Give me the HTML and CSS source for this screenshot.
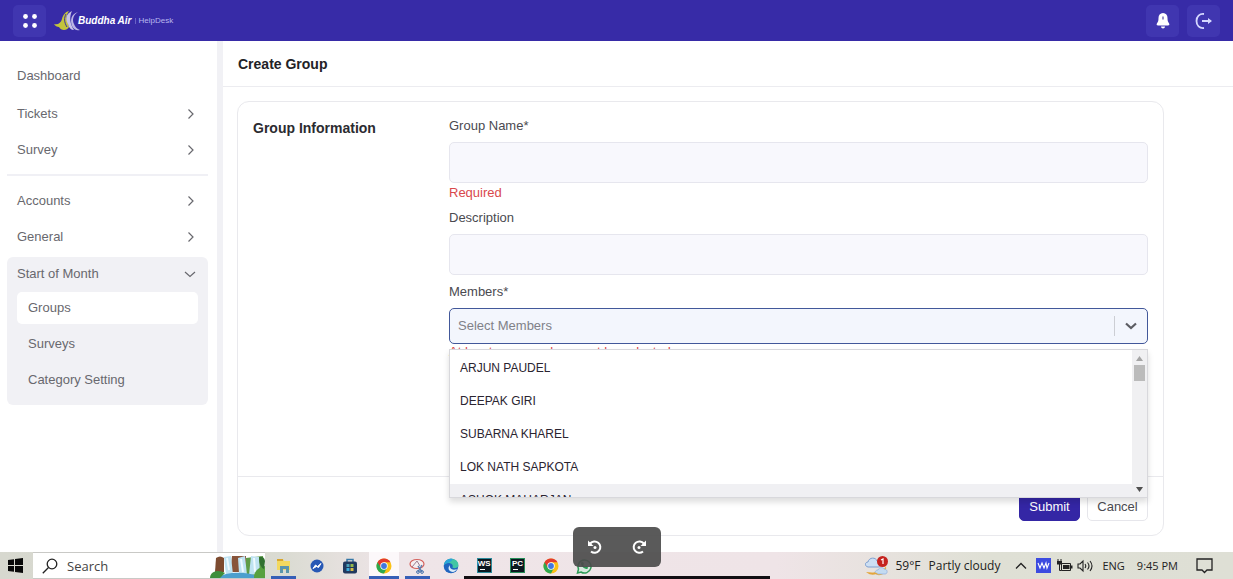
FILE: index.html
```
<!DOCTYPE html>
<html lang="en">
<head>
<meta charset="utf-8">
<meta name="viewport" content="width=device-width, initial-scale=1">
<title>Create Group</title>
<link rel="stylesheet" href="styles.css">
</head>
<body>
<svg class="defs" aria-hidden="true">
  <symbol id="chev-right" viewBox="0 0 10 12"><path d="M2.500 1.500 7 6l-4.500 4.500" fill="none" stroke="currentColor" stroke-width="1.200"/></symbol>
  <symbol id="chrome" viewBox="0 0 16 16">
    <circle cx="8" cy="8" r="7.500" fill="#fbc116"/>
    <path d="M1.500 4.250A7.500 7.500 0 0 0 8 15.500L11 9.800 8 8z" fill="#2da94f"/>
    <path d="M1.500 4.250A7.500 7.500 0 0 1 14.500 4.250H8L5 9.800z" fill="#e33b2e"/>
    <circle cx="8" cy="8" r="3.700" fill="#fff"/><circle cx="8" cy="8" r="2.900" fill="#4077e0"/>
  </symbol>
</svg>

<header class="topbar">
  <button class="tile" aria-label="Open menu">
    <svg width="16" height="16" viewBox="0 0 16 16" fill="#fff"><circle cx="3.500" cy="3.500" r="2.400"/><circle cx="12.500" cy="3.500" r="2.400"/><circle cx="3.500" cy="12.500" r="2.400"/><circle cx="12.500" cy="12.500" r="2.400"/></svg>
  </button>
  <a class="brand" href="#">
    <svg width="26" height="20" viewBox="0 0 26 20">
      <path d="M0 13c4 1 7-1 8-5C9 4 11 1 15 0c-3 4-3 8-1 12l1 4c-2 4-8 4-10 0-2 0-4-1-5-3z" fill="#c3c43c"/>
      <path d="M18 0c-6 3-7 8-4 13 1 4 3 6 6 6-4-6-5-13-2-19z" fill="#c7c3e8"/>
      <path d="M24 1c-5 3-6 8-4 12 1 3 3 5 6 6-3 1-6 0-8-4-2-6-1-12 6-14z" fill="#bbb6e4"/>
      <path d="M12 3c-2 4-2 8 1 13" fill="none" stroke="#372ba7"/>
    </svg>
    <strong>Buddha Air</strong><span class="brand-line"></span><span>HelpDesk</span>
  </a>
  <div class="topbar-actions">
    <button class="tile" aria-label="Notifications">
      <svg width="14" height="16" viewBox="0 0 14 16"><path d="M7 0C4 0 2.500 2.200 2.500 5c0 3-.5 4-1.500 5.200-.8 1.300-.2 2.300 1 2.300h10c1.200 0 1.800-1 1-2.300C12 9 11.500 8 11.500 5 11.500 2.200 10 0 7 0z" fill="#fff"/><path d="M5 13.500h4C9 16 5 16 5 13.500z" fill="#fff"/><path d="M7 3.500v3" stroke="#6860b0" stroke-width="1.400"/></svg>
    </button>
    <button class="tile" aria-label="Log out">
      <svg width="18" height="16" viewBox="0 0 18 16" fill="none" stroke="#d5d8ff" stroke-width="1.800"><path d="M9 1C4.500.5 1.500 3.500 1.500 8S4.500 15.500 9 15M7 8h9"/><path d="m13 5 4 3-4 3z" fill="#d5d8ff" stroke="none"/></svg>
    </button>
  </div>
</header>

<div class="layout">
  <nav class="sidebar" aria-label="Main">
    <a class="nav-item nav-home" href="#">Dashboard</a>
    <a class="nav-item" href="#">Tickets<svg width="10" height="12"><use href="#chev-right"/></svg></a>
    <a class="nav-item" href="#">Survey<svg width="10" height="12"><use href="#chev-right"/></svg></a>
    <hr class="nav-line">
    <a class="nav-item" href="#">Accounts<svg width="10" height="12"><use href="#chev-right"/></svg></a>
    <a class="nav-item" href="#">General<svg width="10" height="12"><use href="#chev-right"/></svg></a>
    <div class="nav-group">
      <a class="nav-item nav-open" href="#">Start of Month<svg width="12" height="10" viewBox="0 0 12 10"><path d="M1 3l5 4.500L11 3" fill="none" stroke="currentColor" stroke-width="1.200"/></svg></a>
      <a class="nav-sub active" href="#">Groups</a>
      <a class="nav-sub" href="#">Surveys</a>
      <a class="nav-sub" href="#">Category Setting</a>
    </div>
  </nav>

  <main class="content">
    <h1 class="page-title">Create Group</h1>
    <form class="card">
      <div class="card-body">
        <h2 class="section-title">Group Information</h2>
        <div class="fields">
          <label for="name">Group Name*</label>
          <input class="text-box" id="name" type="text">
          <p class="error">Required</p>
          <label for="description">Description</label>
          <input class="text-box" id="description" type="text">
          <label class="members-label" for="members">Members*</label>
          <div class="combo">
            <div class="combo-control">
              <input id="members" type="text" role="combobox" aria-expanded="true" aria-controls="member-list" placeholder="Select Members">
              <button type="button" class="combo-toggle" aria-label="Toggle members"><svg width="14" height="10" viewBox="0 0 14 10"><path d="m2 2.500 5 4.500 5-4.500" fill="none" stroke="#5c5d63" stroke-width="2.200"/></svg></button>
            </div>
            <p class="error">At least one member must be selected</p>
            <div class="menu">
              <ul id="member-list" role="listbox" aria-label="Members">
                <li role="option">ARJUN PAUDEL</li>
                <li role="option">DEEPAK GIRI</li>
                <li role="option">SUBARNA KHAREL</li>
                <li role="option">LOK NATH SAPKOTA</li>
                <li role="option" class="hover">ASHOK MAHARJAN</li>
              </ul>
              <div class="scroll" aria-hidden="true">
                <svg width="7" height="5" viewBox="0 0 7 5"><path d="M0 5 3.500 0 7 5z" fill="#a5a5a5"/></svg>
                <span class="thumb"></span>
                <svg class="down" width="7" height="5" viewBox="0 0 7 5"><path d="M0 0h7L3.500 5z" fill="#505050"/></svg>
              </div>
            </div>
          </div>
        </div>
      </div>
      <div class="card-footer">
        <button type="button" class="btn primary">Submit</button>
        <button type="button" class="btn">Cancel</button>
      </div>
    </form>
  </main>
</div>

<footer class="taskbar">
  <button class="start" aria-label="Start"><svg width="15" height="15" viewBox="0 0 15 15"><path d="M0 2l6-.8V7H0zM7 1l8-1v7H7zM0 8h6v5.800L0 13zM7 8h8v7l-8-1z" fill="#080808"/></svg></button>
  <div class="search">
    <svg width="16" height="16" viewBox="0 0 16 16" fill="none" stroke="#222" stroke-width="1.300"><circle cx="10" cy="6" r="4.800"/><path d="M6.500 9.500.8 15.200"/></svg>
    <input type="text" aria-label="Search" placeholder="Search">
    <svg class="scene" width="55" height="23" viewBox="0 0 55 23">
      <path d="M6 3q4-3 8 0v14H5z" fill="#7d4b30"/><path d="M22 1h14v16H20z" fill="#87543a"/><path d="M36 3l17-2 1 20H36z" fill="#5e9c46"/>
      <path d="M14 2l7-1 2 19h-7zM28 3l7-2 2 19-8-2zM41 1l8 1 1 17-11 1z" fill="#bfe3f2"/><path d="M17 3l2 12M31 4l2 13M44 3l1 14" stroke="#eefaff" stroke-width="2"/>
      <path d="M8 23c6-7 35-7 41 0z" fill="#4c9fce"/><path d="M0 23c0-7 9-9 15-5l-5 5z" fill="#3d8e3b"/><path d="M44 23c0-9 7-11 11-12v12z" fill="#57a13e"/><path d="M49 2q5-1 6 4l-1 8q-5-2-5-12z" fill="#31712f"/>
    </svg>
  </div>
  <div class="apps">
    <button class="app running" aria-label="File Explorer"><svg width="16" height="16" viewBox="0 0 16 16"><path d="M1 1h6l1 2h6v9H1z" fill="#f3d95f"/><path d="M1 1h6v2H1z" fill="#d9a62d"/><path d="M4 15V8h9v7h-3v-4H7v4z" fill="#5b95ac"/></svg></button>
    <button class="app" aria-label="Messenger"><svg width="14" height="14" viewBox="0 0 14 14"><circle cx="7" cy="7" r="6.500" fill="#2758b5"/><path d="M3 9.500 5.500 6l2 1.500L11 4.500 8.500 8.500l-2-1z" fill="#fff" stroke="#fff"/></svg></button>
    <button class="app" aria-label="Store"><svg width="16" height="16" viewBox="0 0 16 16"><path d="M5 4V1.500h6V4" fill="none" stroke="#3477a7" stroke-width="1.500"/><rect x="1" y="3.500" width="14" height="12" rx="2" fill="#21395f"/><path d="M4.500 6h3v3h-3z" fill="#4ba0b7"/><path d="M8.500 6h3v3h-3z" fill="#93b84c"/><path d="M4.500 10h3v3h-3z" fill="#3bacdd"/><path d="M8.500 10h3v3h-3z" fill="#d9bd47"/></svg></button>
    <button class="app running current" aria-label="Chrome"><svg width="16" height="16"><use href="#chrome"/></svg></button>
    <button class="app running" aria-label="Snipping Tool"><svg width="16" height="16" viewBox="0 0 16 16" fill="none"><ellipse cx="8" cy="6" rx="7" ry="4.500" fill="#f6eff1" stroke="#d4615c" stroke-width="1.200"/><path d="M3 9 8 3l3 5" stroke="#9c7d90"/><path d="m9 8 4 6m0-7-4 7" stroke="#5c7eaf" stroke-width="1.400"/><circle cx="9" cy="14" r="1.400" stroke="#4773ae"/><circle cx="13" cy="14" r="1.400" stroke="#4773ae"/></svg></button>
    <button class="app" aria-label="Edge"><svg width="16" height="16" viewBox="0 0 16 16"><circle cx="8" cy="8" r="7.300" fill="#2065bf"/><path d="M1 7C2 2 6 0 10 1c4 .8 6 4 5.300 7-.5 2-4 3-6 1.500C11 7 8 4.500 5 5 3 5.300 2 6 1 7z" fill="#43c6a4"/><path d="M1 7c1-5 5-7 9-6-1 2-3 3-5 4-2 .3-3 1-4 2z" fill="#2ba5db"/><path d="M7 7c-1 3 2 6 7 4-1 2-3 3-4 3-4 0-6-4-3-7z" fill="#dcecf8"/></svg></button>
    <button class="app ws" aria-label="WebStorm"><span>WS</span></button>
    <button class="app pc" aria-label="PyCharm"><span>PC</span></button>
    <button class="app" aria-label="Chrome, second profile"><svg width="16" height="16"><use href="#chrome"/></svg></button>
    <button class="app" aria-label="WhatsApp"><svg width="16" height="16" viewBox="0 0 16 16"><path d="M1.500 15l1-4A6.500 6.500 0 1 1 5 14z" fill="#d8eadf" stroke="#2b9b55" stroke-width="1.500"/><path d="M5 4.500c0 4 3 6.500 6.500 6.500L12 9l-2-1-1 1-2-2 1-1-1-2z" fill="#2b9b55"/></svg></button>
  </div>
  <div class="tray">
    <svg width="24" height="20" viewBox="0 0 24 20"><path d="M12 19c6 1 10-3 9-9-2 4-6 7-13 6z" fill="#eeb23c"/><path d="M3 11c-4-1-3-5 0-5 1-5 8-5 9-1 5 0 5 6 1 6z" fill="#cddff3" stroke="#7e9fd0"/><path d="M12 18c-3-1-2-4 1-4 1-3 5-3 6-1 4 0 4 5 1 5z" fill="#c3dbf1" stroke="#8daede" stroke-width=".7"/><path d="M1 16c5 4 9 3 12 1-5 0-8-1-12-1z" fill="#e3a63b"/><circle cx="17.500" cy="5.500" r="5.500" fill="#c5231f"/><path d="M16 4l2-1v5" fill="none" stroke="#fff" stroke-width="1.200"/></svg>
    <span class="weather">59°F</span><span class="weather cloudy">Partly cloudy</span>
    <svg class="caret" width="12" height="8" viewBox="0 0 12 8"><path d="m1 6.500 5-5 5 5" fill="none" stroke="#222" stroke-width="1.300"/></svg>
    <svg class="wave" width="15" height="15" viewBox="0 0 15 15"><path d="M0 0h15v15H0z" fill="#3c4be0"/><path d="M2 5l2 5 2-5 2 5 2-5 1 5 2-5" fill="none" stroke="#fff" stroke-width="1.100"/></svg>
    <svg width="17" height="14" viewBox="0 0 17 14"><path d="M5.500 4.500h9v7h-9z" fill="none" stroke="#222"/><path d="M7 6h6.500v4H7zM15 6.500h1.500v3H15zM1 2h5v3.500H1z" fill="#222"/><path d="M2 0v2m3-2v2M3.500 5v6.500h2" stroke="#222" fill="none"/></svg>
    <svg class="sound" width="16" height="14" viewBox="0 0 16 14" fill="none" stroke="#222" stroke-width="1.100"><path d="M1 5h2l3-3v10L3 9H1zM8 5q1.500 2 0 4M10.500 3.500q3 3.500 0 7M13 2q4 5 0 10"/></svg>
    <span class="lang">ENG</span><span class="clock">9:45 PM</span>
    <svg width="17" height="17" viewBox="0 0 17 17"><path d="M1 2h15v11h-5l-2.500 2.500L6 13H1z" fill="none" stroke="#222" stroke-width="1.300"/></svg>
  </div>
  <div class="task-strip"></div>
</footer>

<div class="rotate-bar">
  <button aria-label="Rotate left"><svg width="16" height="16" viewBox="0 0 16 16"><path d="M3.200 4.500A5.700 5.700 0 1 1 4 12.500" fill="none" stroke="#fff" stroke-width="2"/><path d="M1 1.500V7h5.500z" fill="#fff"/><circle cx="8" cy="8.500" r="1.500" fill="#fff"/></svg></button>
  <button aria-label="Rotate right"><svg width="16" height="16" viewBox="0 0 16 16"><path d="M12.800 4.500A5.700 5.700 0 1 0 12 12.500" fill="none" stroke="#fff" stroke-width="2"/><path d="M15 1.500V7H9.500z" fill="#fff"/><circle cx="8" cy="8.500" r="1.500" fill="#fff"/></svg></button>
</div>
</body>
</html>
```
FILE: styles.css
```
* { box-sizing: border-box; }

body {
  margin: 0;
  min-height: 100vh;
  display: flex;
  flex-direction: column;
  background: #fff;
  color: #4a4a50;
  font: 13px/16px "Liberation Sans", Arial, sans-serif;
}

h1, h2, p, ul { margin: 0; padding: 0; }
ul { list-style: none; }
a { color: inherit; text-decoration: none; }
button, input { font: inherit; color: inherit; }
button { padding: 0; border: 0; background: none; cursor: pointer; }
svg { display: block; flex: none; }
.defs { position: absolute; width: 0; height: 0; }

/* Top bar */
.topbar {
  display: flex;
  align-items: center;
  padding: 4px 13px;
  height: 41px;
  background: #372ba7;
  color: #fff;
}
.tile {
  display: grid;
  place-items: center;
  width: 33px;
  height: 32px;
  border-radius: 5px;
  background: #4036b0;
}
.brand {
  display: flex;
  align-items: center;
  margin-left: 8px;
  font-size: 8px;
  color: #b9b8ee;
}
.brand strong {
  margin-left: -2px;
  color: #fff;
  font-size: 10px;
  font-style: italic;
  font-weight: 900;
}
.brand-line { width: 1px; height: 6px; margin: 0 3px; background: #6a62c6; }
.topbar-actions { display: flex; gap: 8px; margin-left: auto; }

/* Sidebar */
.layout { flex: 1; display: flex; }
.sidebar {
  flex: none;
  width: 223px;
  padding: 17px 9px 0 7px;
  border-right: 6px solid #f1f1f5;
  color: #68686e;
}
.nav-item {
  display: flex;
  align-items: center;
  justify-content: space-between;
  height: 36px;
  padding: 0 12px 0 10px;
  color: #68686e;
}
.nav-home { margin-bottom: 2px; }
.nav-line { height: 2px; margin: 6px 0 7px; border: 0; background: #f0f0f5; }
.nav-group {
  display: flex;
  flex-direction: column;
  gap: 4px;
  margin-top: 2px;
  padding: 0 10px 9px;
  border-radius: 6px;
  background: #f1f1f5;
}
.nav-open { height: 33px; margin-bottom: -2px; padding: 0 2px 0 0; }
.nav-sub { padding: 8px 11px; border-radius: 5px; }
.nav-sub.active { background: #fff; }

/* Content */
.content { flex: 1; min-width: 0; }
.page-title {
  padding: 15px 15px 14px;
  border-bottom: 1px solid #ececf0;
  color: #222226;
  font-size: 14px;
  line-height: 16px;
}
.card {
  margin: 14px 69px 15px 14px;
  border: 1px solid #e9e9ed;
  border-radius: 12px;
}
.card-body { display: grid; grid-template-columns: 196px 1fr; padding: 16px 15px 116px; }
.section-title { padding-top: 1px; color: #2b2b30; font-size: 14px; line-height: 18px; }
.fields { display: flex; flex-direction: column; }
.fields label { margin-bottom: 8px; }
.text-box {
  height: 41px;
  padding: 0 10px;
  border: 1px solid #e6e6ee;
  border-radius: 5px;
  background: #f8f8fd;
}
.error { margin: 2px 0 9px; color: #d9484c; }
.fields .members-label { margin-top: 9px; }
.combo { position: relative; }
.combo .error { margin: 0; }
.combo-control {
  display: flex;
  align-items: center;
  height: 36px;
  border: 1px solid #42589a;
  border-radius: 5px;
  background: #f3f6fd;
}
.combo-control input { flex: 1; min-width: 0; padding: 0 8px; border: 0; outline: 0; background: none; }
.combo-control input::placeholder { color: #808188; opacity: 1; }
.combo-toggle { display: grid; place-items: center; width: 33px; height: 20px; border-left: 1px solid #ccced4; }
.menu {
  position: absolute;
  top: 41px;
  left: 0;
  right: 0;
  display: flex;
  height: 149px;
  overflow: hidden;
  border: 1px solid #d8d8dc;
  background: #fff;
  box-shadow: 0 4px 6px #00000022;
}
.menu ul { flex: 1; padding-top: 2px; }
.menu li { padding: 8px 10px; color: #2a2430; font-size: 12px; line-height: 17px; }
.menu .hover { background: #f0f0f3; }
.scroll { display: flex; flex-direction: column; align-items: center; gap: 4px; width: 15px; padding: 6px 0 5px; background: #f0f0f2; }
.thumb { width: 11px; height: 16px; background: #bbb; }
.down { margin-top: auto; }
.card-footer { display: flex; justify-content: flex-end; gap: 7px; padding: 15px 15px 14px; border-top: 1px solid #e9e9ed; }
.btn { width: 61px; height: 29px; border: 1px solid #e6e6eb; border-radius: 5px; background: #fff; }
.btn.primary { border-color: #3426a5; background: #3426a5; color: #fff; }

/* Desktop task bar */
.taskbar {
  position: relative;
  display: flex;
  align-items: stretch;
  height: 27px;
  background: linear-gradient(90deg, #d7d8cf 0, #dadbd2 23%, #efe5e8 32%, #efe4e7 63%, #dfe0d5 80%, #dedfd5 100%);
  color: #222;
  font: 12px/16px "Open Sans", "Noto Sans", sans-serif;
}
.start { display: grid; place-items: center; width: 33px; }
.start svg { margin-right: 2px; }
.search { display: flex; align-items: center; width: 232px; padding-left: 9px; border: solid #c9c9c6; border-width: 1px 0; background: #fff; }
.search input { flex: 1; min-width: 0; padding: 0 9px; border: 0; outline: 0; background: none; font-size: 13px; }
.search input::placeholder { color: #444; opacity: 1; }
.scene { align-self: flex-end; }
.apps { display: grid; grid-template-columns: repeat(10, 1fr); width: 334px; margin-left: 2px; }
.app { display: grid; place-items: center; margin: 0 2px; border-bottom: 0 solid #365fb7; }
.app.running { margin: 0 4px; padding-top: 3px; border-bottom-width: 3px; }
.app.current { margin: 0 2px; background: #fcf8fa; }
.app span {
  width: 15px;
  height: 15px;
  border: 1px solid #2b8a9b;
  background: #0b1820;
  color: #fff;
  font: bold 8px/9px "Liberation Sans", Arial, sans-serif;
}
.app.pc span { border-color: #258d58; }
.app span::after { content: ""; display: block; width: 5px; height: 1px; margin: 1px 0 0 2px; background: #fff; }
.tray { display: flex; align-items: center; margin-left: auto; padding-right: 20px; white-space: nowrap; }
.weather { margin-left: 6px; }
.cloudy { margin-left: 8px; }
.caret { margin: 0 9px 0 15px; }
.wave { margin-right: 5px; }
.sound { margin: 0 9px 0 4px; }
.lang, .clock { font-size: 11px; }
.clock { margin: 0 18px 0 12px; }
.task-strip {
  position: absolute;
  bottom: 0;
  left: 50%;
  width: 306px;
  height: 3px;
  background: #120e12;
  transform: translateX(-50%);
}

/* Floating rotate controls */
.rotate-bar {
  position: fixed;
  bottom: 12px;
  left: 50%;
  display: flex;
  gap: 28px;
  padding: 12px 14px;
  border-radius: 6px;
  background: #4b4b4bea;
  transform: translateX(-50%);
}
```
